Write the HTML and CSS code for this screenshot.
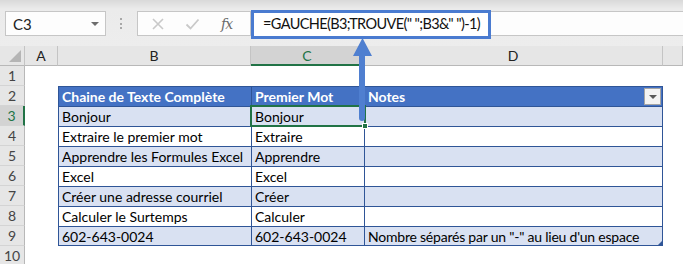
FILE: index.html
```html
<!DOCTYPE html>
<html lang="fr">

<head>
    <meta charset="UTF-8">
    <title>GAUCHE et TROUVE</title>
    <link rel="stylesheet" href="styles.css">
</head>

<body>
    <div class="toolbar">
        <div class="namebox"><span>C3</span><i class="caret"></i></div>
        <div class="grip"></div>
        <div class="fxbox">
            <svg class="ico" width="14" height="14" viewBox="0 0 14 14"><path d="M2 2 L12 12 M12 2 L2 12" stroke="#c9c9c9" stroke-width="1.6" fill="none"/></svg>
            <svg class="ico" width="15" height="14" viewBox="0 0 15 14"><path d="M1.5 7.5 L5.5 11.5 L13.5 2.5" stroke="#c9c9c9" stroke-width="1.8" fill="none"/></svg>
            <span class="fx">fx</span>
        </div>
        <div class="formula">
            <div class="callout">=GAUCHE(B3;TROUVE(" ";B3&amp;" ")-1)</div>
        </div>
    </div>

    <div class="sheet">
        <div class="corner"><i></i></div>
        <div class="ch">A</div>
        <div class="ch">B</div>
        <div class="ch ch_on">C</div>
        <div class="ch">D</div>
        <div class="ch"></div>

        <div class="rh">1</div><div class="c"></div><div class="c"></div><div class="c"></div><div class="c"></div><div class="c"></div>

        <div class="rh">2</div><div class="c"></div>
        <div class="t th">Chaine de Texte Complète</div>
        <div class="t th">Premier Mot</div>
        <div class="t th tr">Notes<span class="filter"><i></i></span></div>
        <div class="c"></div>

        <div class="rh rh_on">3</div><div class="c"></div>
        <div class="t band">Bonjour</div>
        <div class="t band">Bonjour</div>
        <div class="t band tr"></div>
        <div class="c"></div>

        <div class="rh">4</div><div class="c"></div>
        <div class="t">Extraire le premier mot</div>
        <div class="t">Extraire</div>
        <div class="t tr"></div>
        <div class="c"></div>

        <div class="rh">5</div><div class="c"></div>
        <div class="t band">Apprendre les Formules Excel</div>
        <div class="t band">Apprendre</div>
        <div class="t band tr"></div>
        <div class="c"></div>

        <div class="rh">6</div><div class="c"></div>
        <div class="t">Excel</div>
        <div class="t">Excel</div>
        <div class="t tr"></div>
        <div class="c"></div>

        <div class="rh">7</div><div class="c"></div>
        <div class="t band">Créer une adresse courriel</div>
        <div class="t band">Créer</div>
        <div class="t band tr"></div>
        <div class="c"></div>

        <div class="rh">8</div><div class="c"></div>
        <div class="t">Calculer le Surtemps</div>
        <div class="t">Calculer</div>
        <div class="t tr"></div>
        <div class="c"></div>

        <div class="rh">9</div><div class="c"></div>
        <div class="t band last">602-643-0024</div>
        <div class="t band last">602-643-0024</div>
        <div class="t band last tr notes">Nombre séparés par un "-" au lieu d'un espace<i class="resize"></i></div>
        <div class="c"></div>

        <div class="rh">10</div><div class="c"></div><div class="c"></div><div class="c"></div><div class="c"></div><div class="c"></div>

        <div class="selection"><i></i></div>
        <svg class="arrow" width="26" height="86" viewBox="0 0 26 86">
            <path d="M12.5 1 L3 19 L9 19 L9 81 Q9 84 12 84 Q15 84 15 81 L15 19 L22 19 Z" fill="#4f7fd0"/>
        </svg>
    </div>
</body>

</html>
```

FILE: styles.css
```css
* {
    margin: 0;
    padding: 0;
    box-sizing: border-box;
}

body {
    width: 683px;
    height: 264px;
    overflow: hidden;
    background: #fff;
    font-family: Lato, "Liberation Sans", sans-serif;
    color: #000;
}

/* formula bar */
.toolbar {
    height: 46px;
    display: flex;
    align-items: flex-start;
    padding: 11px 0 0 5px;
    background: linear-gradient(#d9d9d9, #ebebeb 9px, #ededed);
}
.namebox {
    width: 101px;
    height: 25px;
    background: #fdfdfd;
    border: 1px solid #c6c6c6;
    display: flex;
    align-items: center;
    justify-content: space-between;
    padding: 0 6px 0 7px;
    font-size: 15px;
    color: #222;
}
.caret {
    border-left: 4px solid transparent;
    border-right: 4px solid transparent;
    border-top: 4px solid #6d6d6d;
}
.grip {
    width: 3px;
    height: 11px;
    margin: 7px 14px 0 14px;
    border-left: 2px dotted #a8a8a8;
}
.fxbox {
    width: 114px;
    height: 25px;
    background: #fdfdfd;
    border: 1px solid #c6c6c6;
    display: flex;
    align-items: center;
    padding: 0 0 0 13px;
}
.fxbox .ico {
    margin-right: 20px;
}
.fxbox .ico + .ico {
    margin-right: 21px;
}
.fx {
    font-family: "DejaVu Serif", "Liberation Serif", serif;
    font-style: italic;
    font-size: 14px;
    color: #6b6b6b;
    letter-spacing: -1px;
}
.formula {
    flex: 1;
    height: 25px;
    position: relative;
    background: #fdfdfd;
    border-top: 1px solid #c6c6c6;
    border-bottom: 1px solid #c6c6c6;
}
.callout {
    position: absolute;
    left: 0;
    top: -2px;
    width: 240px;
    height: 29px;
    border: 3px solid #4a7bd0;
    background: #fff;
    padding: 2px 0 0 9px;
    font-size: 14.5px;
    letter-spacing: -0.62px;
    color: #111;
    white-space: nowrap;
}

/* sheet grid */
.sheet {
    position: relative;
    display: grid;
    grid-template-columns: 25px 33px 193px 113px 299px 1fr;
    grid-template-rows: 20px repeat(10, 20px);
    font-size: 14px;
}
.corner {
    background: #e6e6e6;
    border-right: 1px solid #c4c4c4;
    border-bottom: 1px solid #b8b8b8;
    position: relative;
}
.corner i {
    position: absolute;
    right: 3px;
    bottom: 3px;
    border-left: 12px solid transparent;
    border-bottom: 12px solid #b5b5b5;
}
.ch {
    background: #e6e6e6;
    border-right: 1px solid #c4c4c4;
    border-bottom: 1px solid #b8b8b8;
    text-align: center;
    line-height: 20px;
    color: #222;
}
.ch_on {
    background: #d3d3d3;
    color: #217346;
    border-bottom: 2px solid #217346;
}
.rh {
    background: #e6e6e6;
    border-right: 1px solid #b8b8b8;
    border-bottom: 1px solid #d4d4d4;
    text-align: center;
    line-height: 20px;
    color: #444;
}
.rh_on {
    background: #d3d3d3;
    color: #217346;
    border-right: 2px solid #217346;
}
.c {
    background: #fff;
}

/* table */
.t {
    border-top: 1px solid #2f5597;
    border-left: 1px solid #2f5597;
    padding: 1px 0 0 3px;
    line-height: 18px;
    white-space: nowrap;
    position: relative;
}
.th {
    background: #4472c4;
    color: #fff;
    font-weight: bold;
}
.band {
    background: #d9e1f2;
}
.tr {
    border-right: 1px solid #2f5597;
}
.last {
    border-bottom: 1px solid #2f5597;
}
.notes {
    letter-spacing: -0.22px;
}
.filter {
    position: absolute;
    right: 1px;
    top: 1px;
    width: 17px;
    height: 17px;
    background: #f3f3f3;
    border: 1px solid #a5a5a5;
    display: flex;
    align-items: center;
    justify-content: center;
}
.filter i {
    border-left: 4px solid transparent;
    border-right: 4px solid transparent;
    border-top: 4px solid #595959;
}
.resize {
    position: absolute;
    right: 0;
    bottom: 0;
    border-left: 4px solid transparent;
    border-bottom: 4px solid #2f5597;
}

/* overlays */
.selection {
    position: absolute;
    left: 250px;
    top: 59px;
    width: 116px;
    height: 22px;
    border: 2px solid #217346;
}
.selection i {
    position: absolute;
    right: -4px;
    bottom: -4px;
    width: 6px;
    height: 6px;
    background: #217346;
    border: 1px solid #fff;
}
.arrow {
    position: absolute;
    left: 350px;
    top: -9px;
}
```
